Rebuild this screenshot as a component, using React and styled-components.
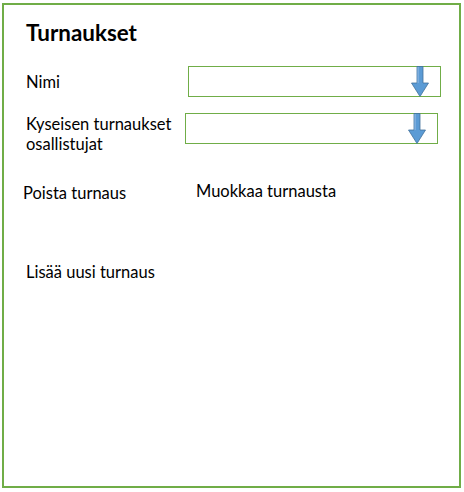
import React from "react";
import styled, { createGlobalStyle } from "styled-components";

const Global = createGlobalStyle`
  html, body { margin: 0; padding: 0; background: #fff; }
  body { font-family: Lato, "Open Sans", sans-serif; color: #000; }
`;

const Frame = styled.div`
  box-sizing: border-box;
  margin: 3px 0 0 2px;
  width: 459px;
  height: 485px;
  border: 2px solid #70ad47;
  padding: 16px 0 0 22px;
  display: flex;
  flex-direction: column;
`;

const Title = styled.h1`
  margin: 0;
  font-size: 22.4px;
  font-weight: 700;
  line-height: 24px;
  height: 45px;
`;

const FieldRow = styled.div`
  display: flex;
  align-items: flex-start;
  height: ${(p) => p.$h}px;
`;

const Label = styled.div`
  width: ${(p) => p.$w}px;
  font-size: 16.5px;
  line-height: 20px;
  padding-top: ${(p) => p.$top || 0}px;
`;

const SelectBox = styled.div`
  position: relative;
  box-sizing: border-box;
  width: 253px;
  height: 31px;
  border: 1px solid #70ad47;
`;

const ArrowIcon = styled.svg`
  position: absolute;
  top: -1px;
  right: 11px;
`;

const Actions = styled.div`
  display: flex;
  align-items: flex-start;
  margin-top: 8px;
  height: 81px;
`;

const Action = styled.div`
  font-size: 16.5px;
  line-height: 20px;
  width: ${(p) => p.$w || "auto"};
  margin-left: ${(p) => p.$ml || 0}px;
  margin-top: ${(p) => p.$mt || 0}px;
`;

function Arrow() {
  return (
    <ArrowIcon width="18" height="31" viewBox="0 0 18 31">
      <path
        d="M6 0.5 H12 V17 H17.5 L9 30.5 L0.5 17 H6 Z"
        fill="#5b9bd5"
        stroke="#41719c"
        strokeWidth="0.8"
      />
      <rect x="6.5" y="1" width="1.2" height="16" fill="#8ab6e2" />
    </ArrowIcon>
  );
}

export default function App() {
  return (
    <>
      <Global />
      <Frame>
        <Title>Turnaukset</Title>
        <FieldRow $h={47}>
          <Label $w={162} $top={6}>Nimi</Label>
          <SelectBox>
            <Arrow />
          </SelectBox>
        </FieldRow>
        <FieldRow $h={60}>
          <Label $w={159} $top={1}>
            Kyseisen turnaukset
            <br />
            osallistujat
          </Label>
          <SelectBox>
            <Arrow />
          </SelectBox>
        </FieldRow>
        <Actions>
          <Action $w="173px" $ml={-3} $mt={2}>Poista turnaus</Action>
          <Action>Muokkaa turnausta</Action>
        </Actions>
        <Action>Lisää uusi turnaus</Action>
      </Frame>
    </>
  );
}
